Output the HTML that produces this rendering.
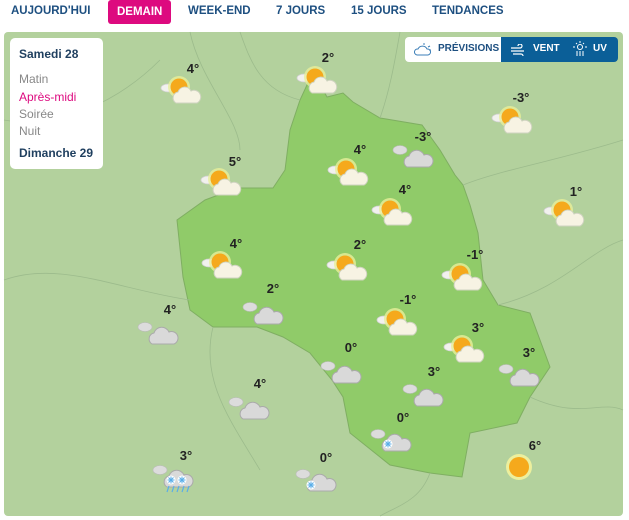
<!DOCTYPE html>
<html><head><meta charset="utf-8"><style>
body{margin:0;width:629px;height:520px;background:#fff;font-family:"Liberation Sans",sans-serif;overflow:hidden;position:relative}
.tabs{position:absolute;top:0;left:0;height:24px;font-size:11.5px;font-weight:bold;color:#1d4f80}
.tabs span{position:absolute;top:5px;white-space:nowrap}
.tabs .on{background:#dd0a7f;color:#fff;top:0;height:24px;line-height:24px;padding:0 9px;border-radius:3px}
.map{position:absolute;left:4px;top:32px;width:619px;height:484px;border-radius:4px;overflow:hidden;background:#b3d19d}
.panel{position:absolute;left:10px;top:38px;width:93px;height:131px;background:#fff;border-radius:5px;font-size:12px;color:#888}
.panel div{position:absolute;left:9px;white-space:nowrap}
.btns{position:absolute;left:405px;top:37px;width:213px;height:25px;border-radius:4px;overflow:hidden;font-size:10px;font-weight:bold;white-space:nowrap}
</style></head><body>
<div class="tabs">
<span style="left:11px">AUJOURD'HUI</span>
<span class="on" style="left:108px">DEMAIN</span>
<span style="left:188px">WEEK-END</span>
<span style="left:276px">7 JOURS</span>
<span style="left:351px">15 JOURS</span>
<span style="left:432px">TENDANCES</span>
</div>
<div class="map"></div>
<svg style="position:absolute;left:0;top:0" width="629" height="520">
<defs>
<g id="sc">
<ellipse cx="8" cy="15" rx="7" ry="4" fill="#f1f1ee" stroke="#cfcfcf" stroke-width=".8"/>
<circle cx="19" cy="14" r="11" fill="#e9ef9a" opacity=".8"/>
<circle cx="19" cy="14" r="8.5" fill="#f5a91c"/>
<path d="M16 30 a6 6 0 0 1 2-11 a7 7 0 0 1 13-1 a6 6 0 0 1 6 12z" fill="#f7f3e3" stroke="#cfd3c0" stroke-width="1"/>
</g>
<g id="cl">
<ellipse cx="8" cy="10" rx="7" ry="4.5" fill="#dcdcdc" stroke="#bbb" stroke-width=".6"/>
<path d="M15 27 a6 6 0 0 1 2-11 a8 8 0 0 1 15-1 a6 6 0 0 1 5 12z" fill="#d9d9d9" stroke="#aaa" stroke-width="1"/>
</g>
<g id="snow"><circle r="4.5" fill="#fff"/><path d="M-3.5 0h7M0-3.5v7M-2.5-2.5l5 5M2.5-2.5l-5 5" stroke="#5aaee8" stroke-width="1"/></g>
</defs>
<path d="M313 72 L327 97 L343 93 L353 102 L380 118 L422 125 L440 150 L455 175 L463 185 L470 205 L478 233 L483 280 L498 305 L530 313 L550 367 L530 397 L517 423 L470 433 L462 477 L430 473 L390 465 L350 433 L343 397 L332 380 L310 353 L283 337 L257 327 L213 327 L190 310 L183 277 L177 220 L205 200 L237 188 L273 188 L285 170 L290 130 L300 100 Z" fill="#90cb69" stroke="#7fae62" stroke-width="1"/>
<g fill="none" stroke="#9cbb8c" stroke-width=".8">
<path d="M4 120 C60 130 120 100 160 60 M190 32 C200 80 240 120 240 150 M4 280 C60 260 120 290 190 300 M213 327 C200 380 230 420 260 470 M430 473 C420 500 400 505 380 516 M530 397 C580 420 600 400 623 410 M498 305 C560 290 590 250 623 240 M463 185 C500 170 560 160 623 140 M380 118 C390 90 395 60 400 32 M300 100 C260 90 250 60 240 32"/>
</g>
<use href="#sc" x="160" y="73"/><use href="#sc" x="296" y="63"/><use href="#sc" x="491" y="103"/>
<use href="#cl" x="392" y="140"/><use href="#sc" x="327" y="155"/><use href="#sc" x="200" y="165"/>
<use href="#sc" x="371" y="195"/><use href="#sc" x="543" y="196"/><use href="#sc" x="201" y="248"/>
<use href="#sc" x="326" y="250"/><use href="#sc" x="441" y="260"/><use href="#cl" x="242" y="297"/>
<use href="#cl" x="137" y="317"/><use href="#sc" x="376" y="305"/><use href="#sc" x="443" y="332"/>
<use href="#cl" x="320" y="356"/><use href="#cl" x="498" y="359"/><use href="#cl" x="402" y="379"/>
<use href="#cl" x="228" y="392"/><use href="#cl" x="370" y="424"/><use href="#snow" x="388" y="444"/>
<circle cx="519" cy="467" r="13" fill="#ecef9d"/><circle cx="519" cy="467" r="10" fill="#f5a91c"/>
<use href="#cl" x="152" y="460"/><use href="#cl" x="295" y="464"/><use href="#snow" x="311" y="485"/>
<use href="#snow" x="171" y="480"/><use href="#snow" x="182" y="480"/>
<path d="M167 492l2-6M172 492l2-6M177 492l2-6M182 492l2-6M187 492l2-6" stroke="#5aaee8" stroke-width="1.2"/>
<g font-family="Liberation Sans,sans-serif" font-weight="bold" font-size="13" fill="#222" text-anchor="middle">
<text x="193" y="73">4°</text><text x="328" y="62">2°</text><text x="521" y="102">-3°</text>
<text x="423" y="141">-3°</text><text x="360" y="154">4°</text><text x="235" y="166">5°</text>
<text x="405" y="194">4°</text><text x="576" y="196">1°</text><text x="236" y="248">4°</text>
<text x="360" y="249">2°</text><text x="475" y="259">-1°</text><text x="273" y="293">2°</text>
<text x="170" y="314">4°</text><text x="408" y="304">-1°</text><text x="478" y="332">3°</text>
<text x="351" y="352">0°</text><text x="529" y="357">3°</text><text x="434" y="376">3°</text>
<text x="260" y="388">4°</text><text x="403" y="422">0°</text><text x="535" y="450">6°</text>
<text x="186" y="460">3°</text><text x="326" y="462">0°</text>
</g>
</svg>
<div class="panel">
<div style="top:9px;color:#1f3f5f;font-weight:bold">Samedi 28</div>
<div style="top:34px">Matin</div>
<div style="top:52px;color:#dd0a7f">Après-midi</div>
<div style="top:69px">Soirée</div>
<div style="top:86px">Nuit</div>
<div style="top:108px;color:#1f3f5f;font-weight:bold">Dimanche 29</div>
</div>
<div class="btns">
<div style="position:absolute;left:0;top:0;width:96px;height:25px;background:#fff;color:#1d4f80">
<svg style="position:absolute;left:9px;top:5px" width="18" height="15"><path d="M3 13a3 3 0 0 1 1-6a5 5 0 0 1 9 0a3 3 0 0 1 1 6z" fill="none" stroke="#3d7fb8" stroke-width="1"/><path d="M10 3v-2M14 5l2-1M15 8h2" stroke="#3d7fb8"/></svg>
<span style="position:absolute;left:33px;top:6px">PRÉVISIONS</span></div>
<div style="position:absolute;left:96px;top:0;width:117px;height:25px;background:#0b5f98;color:#fff">
<svg style="position:absolute;left:9px;top:7px" width="16" height="12"><path d="M1 4h9a2 2 0 1 0-2-2M1 7h13M3 10h8a2 2 0 1 1-2 2" fill="none" stroke="#fff" stroke-width="1.2"/></svg>
<span style="position:absolute;left:32px;top:6px">VENT</span>
<svg style="position:absolute;left:72px;top:4px" width="14" height="16"><circle cx="7" cy="6" r="2.5" fill="none" stroke="#fff"/><path d="M7 0v2M2 6h-2M12 6h2M3 2l1 1M11 2l-1 1M4 10v5M7 10v5M10 10v5" stroke="#fff"/></svg>
<span style="position:absolute;left:92px;top:6px">UV</span></div>
</div>
</body></html>
